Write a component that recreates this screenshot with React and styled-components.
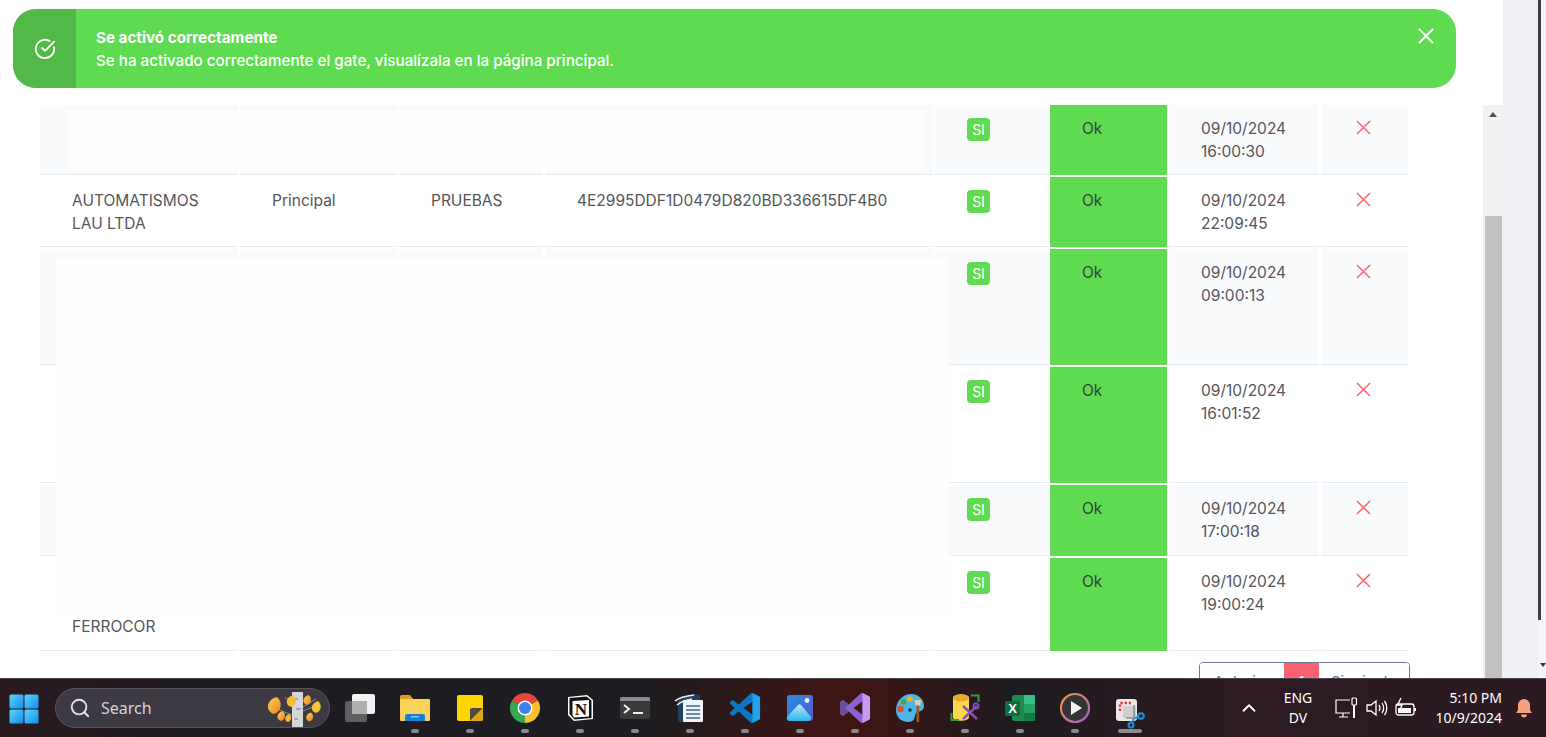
import React from 'react'
import styled, { createGlobalStyle } from 'styled-components'
import { CircleCheckBig, ChevronUp, Search } from 'lucide-react'

const GREEN = '#5fdb52'
const RED = '#fb6271'

const GlobalStyle = createGlobalStyle`
  * { box-sizing: border-box; }
  html, body { margin: 0; height: 100%; overflow: hidden; }
  body { font-family: 'Inter', 'Open Sans', sans-serif; background: #fff; color: #55555a; }
`

const Screen = styled.div`
  width: 1546px;
  height: 737px;
  display: flex;
  flex-direction: column;
  overflow: hidden;
`
const Desktop = styled.div`
  position: relative;
  height: 678px;
  display: flex;
  overflow: hidden;
`
const Content = styled.main`
  width: 1483px;
  padding: 103px 0 0 38px;
`
const Scrollbar = styled.div`
  width: 20px;
  margin-top: 105px;
  background: #f1f1f1;
  display: flex;
  flex-direction: column;
  align-items: center;
`
const ScrollArrow = styled.div`
  width: 0;
  height: 0;
  margin-top: 7px;
  border-left: 4px solid transparent;
  border-right: 4px solid transparent;
  border-bottom: 5px solid #505050;
`
const ScrollThumb = styled.div`
  width: 17px;
  flex: 1;
  margin-top: 99px;
  background: #c1c1c1;
`
const SideStrip = styled.aside`
  width: 43px;
  display: flex;
  background: #eff1f7;
`
const StripFill = styled.div`
  width: 35px;
`
const StripEdge = styled.div`
  flex: 1;
  position: relative;
  background: #f4f5f9;
  &::after {
    content: '';
    position: absolute;
    right: 0;
    top: 663px;
    border-left: 3px solid transparent;
    border-right: 3px solid transparent;
    border-top: 4px solid #333;
  }
`
const StripThumb = styled.div`
  width: 3px;
  height: 620px;
  background: #3f3f43;
`

const Toast = styled.div`
  position: absolute;
  left: 13px;
  top: 9px;
  width: 1443px;
  height: 79px;
  display: flex;
  border-radius: 23px;
  overflow: hidden;
  background: ${GREEN};
  color: #fff;
`
const ToastIcon = styled.div`
  width: 63px;
  display: flex;
  align-items: center;
  justify-content: center;
  background: #52b847;
`
const ToastBody = styled.div`
  flex: 1;
  padding: 17px 0 0 20px;
  font-size: 15.2px;
  line-height: 23px;
`
const ToastTitle = styled.div`
  font-weight: 700;
`
const ToastText = styled.div`
  font-weight: 500;
`
const ToastClose = styled.button`
  width: 16px;
  height: 16px;
  padding: 0;
  margin: 19px 22px 0 0;
  border: 0;
  background: none;
  display: flex;
`

const TableWrap = styled.div`
  position: relative;
  width: 1372px;
`
const Table = styled.table`
  width: 1372px;
  table-layout: fixed;
  border-collapse: separate;
  border-spacing: 2px;
  font-size: 15.5px;
  line-height: 23.5px;
`
const Row = styled.tr`
  td { height: ${(p) => p.$height}px; }
  &:nth-child(odd) td { background: #f9fafc; }
`
const Cell = styled.td`
  padding: 11.5px 0 ${(p) => (p.$bottom ? 12 : 0)}px 32px;
  vertical-align: ${(p) => (p.$bottom ? 'bottom' : 'top')};
  border-bottom: 1px solid #e3ecf5;
`
const StatusCell = styled(Cell)`
  &&&& { background: ${GREEN}; }
  border-bottom-color: ${GREEN};
  color: #33413a;
`
const ActionCell = styled(Cell)`
  padding: 15px 0 0 35px;
`
const Badge = styled.span`
  display: block;
  width: 23px;
  height: 23px;
  margin-top: 1.5px;
  border-radius: 4px;
  background: ${GREEN};
  color: #fff;
  font-size: 14px;
  line-height: 23px;
  text-align: center;
`
const Mask = styled.div`
  position: absolute;
  left: ${(p) => p.$left}px;
  top: ${(p) => p.$top}px;
  width: ${(p) => p.$width}px;
  height: ${(p) => p.$height}px;
  background: #fefefe;
`

const Pagination = styled.nav`
  width: 1372px;
  margin-top: 9px;
  display: flex;
  justify-content: flex-end;
`
const PageGroup = styled.div`
  display: flex;
  height: 46px;
  border: 1px solid #6c7a8e;
  border-radius: 4px;
  overflow: hidden;
`
const PageButton = styled.div`
  width: ${(p) => p.$width}px;
  text-align: center;
  font-size: 15px;
  line-height: 38px;
  color: ${(p) => (p.$active ? '#fff' : '#6c757d')};
  background: ${(p) => (p.$active ? RED : '#fff')};
`

const Taskbar = styled.footer`
  height: 59px;
  display: flex;
  align-items: stretch;
  padding-left: 9px;
  border-top: 1px solid #45454a;
  color: #fff;
  font-family: 'Noto Sans', 'Open Sans', sans-serif;
  background: linear-gradient(90deg, #2a1a20 0, #1f1c22 190px, #1d1c21 640px, #3f1513 830px, #3f1513 860px, #1e1b20 1010px, #2d1a22 1230px, #2c1a22 1546px);
`
const StartButton = styled.div`
  width: 30px;
  margin-top: 15px;
`
const SearchBox = styled.div`
  position: relative;
  width: 275px;
  height: 40px;
  margin: 9px 2px 0 16px;
  padding-left: 45px;
  border: 1px solid #57545c;
  border-radius: 20px;
  overflow: hidden;
  background: #3d3a44;
  color: #d5d1d6;
  font-size: 16px;
  line-height: 38px;
`
const SearchGlyph = styled(Search)`
  position: absolute;
  left: 13px;
  top: 8px;
`
const SearchArt = styled.svg`
  position: absolute;
  right: 6px;
  top: 0;
`
const TaskItem = styled.div`
  width: 55px;
  padding-top: 13px;
  display: flex;
  flex-direction: column;
  align-items: center;
`
const IconBox = styled.svg`
  display: block;
  overflow: visible;
`
const Pip = styled.div`
  width: ${(p) => (p.$wide ? 24 : 8)}px;
  height: 4px;
  margin-top: 5px;
  border-radius: 2px;
  background: ${(p) => (p.$wide ? '#8d8b90' : '#8a888c')};
`
const Tray = styled.div`
  margin-left: auto;
  display: flex;
  align-items: center;
`
const TrayChevron = styled(ChevronUp)`
  margin: 0 15px 0 0;
`
const Lang = styled.div`
  width: 44px;
  margin: 0 14px 0 1px;
  text-align: center;
  font-size: 14px;
  line-height: 20px;
`
const TrayIcons = styled.div`
  display: flex;
  align-items: center;
  gap: 6px;
  width: 88px;
`
const Clock = styled.div`
  width: 80px;
  text-align: right;
  font-size: 14px;
  line-height: 20px;
`
const Bell = styled.svg`
  margin: 0 13px 0 13px;
`

function Cross({ size = 15, color = RED, width = 1.6 }) {
  return (
    <svg width={size} height={size} viewBox="0 0 16 16" style={{ display: 'block' }}>
      <path d="M1 1L15 15M15 1L1 15" stroke={color} strokeWidth={width} fill="none" />
    </svg>
  )
}

function WindowsLogo() {
  return (
    <svg width="30" height="30" viewBox="0 0 30 30">
      <defs>
        <linearGradient id="win" x1="0" y1="0" x2="1" y2="1">
          <stop offset="0" stopColor="#5fd3fb" />
          <stop offset="1" stopColor="#0f8fef" />
        </linearGradient>
      </defs>
      <rect x="0.5" y="0.5" width="14" height="14" rx="1.5" fill="url(#win)" />
      <rect x="15.5" y="0.5" width="14" height="14" rx="1.5" fill="url(#win)" />
      <rect x="0.5" y="15.5" width="14" height="14" rx="1.5" fill="url(#win)" />
      <rect x="15.5" y="15.5" width="14" height="14" rx="1.5" fill="url(#win)" />
    </svg>
  )
}

const Leaf = ({ x, y, r = 5, fill = 'url(#leaf)' }) => (
  <path d={`M${x + r * 0.3} ${y - r}C${x + r} ${y - r * 0.6} ${x + r} ${y + r * 0.7} ${x} ${y + r}C${x - r} ${y + r * 0.7} ${x - r} ${y - r * 0.6} ${x + r * 0.3} ${y - r}Z`} fill={fill} />
)

function AutumnArt() {
  return (
    <SearchArt width="60" height="38" viewBox="0 0 60 38">
      <defs>
        <linearGradient id="leaf" x1="0" y1="0" x2="1" y2="1">
          <stop offset="0" stopColor="#fbd04a" />
          <stop offset="1" stopColor="#f0812c" />
        </linearGradient>
      </defs>
      <rect x="29" y="3" width="11" height="35" fill="#d5d6dc" />
      <path d="M31 10h4M33 20h5M31 30h4" stroke="#77757c" strokeWidth="1" />
      <path d="M14 20L29 26M29 14L22 8M40 18L53 10M40 22L52 17" stroke="#8d8790" strokeWidth="1" />
      <Leaf x={11} y={16.5} r={8.5} />
      <Leaf x={28} y={12} r={6} fill="#f8bd35" />
      <Leaf x={18} y={27} r={5} />
      <Leaf x={25} y={29} r={4} fill="#f8b636" />
      <Leaf x={44} y={11} r={5} />
      <Leaf x={53} y={18} r={6} fill="#f8c53a" />
      <Leaf x={46.5} y={28} r={4.5} />
    </SearchArt>
  )
}

const Icon32 = ({ children }) => (
  <IconBox width="32" height="32" viewBox="0 0 32 32">{children}</IconBox>
)

function TaskViewIcon() {
  return (
    <Icon32>
      <rect x="1" y="9" width="22" height="21" rx="2" fill="#5f5f5f" />
      <rect x="8" y="2" width="23" height="20" rx="2" fill="#f2f2f2" />
      <path d="M8 9h15v13H10a2 2 0 0 1-2-2z" fill="#b0b0b0" />
    </Icon32>
  )
}

function FolderIcon() {
  return (
    <Icon32>
      <path d="M1 5a2 2 0 0 1 2-2h8l3 4H1z" fill="#d9a21c" />
      <path d="M1 7h29a1 1 0 0 1 1 1v20a1 1 0 0 1-1 1H2a1 1 0 0 1-1-1z" fill="#fbd158" />
      <path d="M6 24a2 2 0 0 1 2-2h16a2 2 0 0 1 2 2v5H6z" fill="#1282d6" />
      <rect x="12" y="24" width="8" height="1.5" fill="#7cc8f5" />
    </Icon32>
  )
}

function StickyIcon() {
  return (
    <Icon32>
      <rect x="3" y="3" width="26" height="26" rx="2" fill="#ffd400" />
      <path d="M16 29V18a2 2 0 0 1 2-2h11L16 29z" fill="#4b4a47" />
      <path d="M29 16v11a2 2 0 0 1-2 2H16z" fill="#e0a70c" />
    </Icon32>
  )
}

function ChromeIcon() {
  return (
    <Icon32>
      <path d="M16 16L3 8.5A15 15 0 0 1 29 8.5z" fill="#e8453c" />
      <path d="M16 16L3 8.5A15 15 0 0 0 16 31z" fill="#34a853" />
      <path d="M16 16L29 8.5A15 15 0 0 1 16 31z" fill="#fbc02d" />
      <circle cx="16" cy="16" r="7.5" fill="#fff" />
      <circle cx="16" cy="16" r="6" fill="#3b82ec" />
    </Icon32>
  )
}

function NotionIcon() {
  return (
    <Icon32>
      <path d="M4 5L23 3L29 8V27L10 29L4 23z" fill="#fff" />
      <path d="M5.5 6L22.5 4.5L27.5 8.5V26L10.5 27.5L5.5 22z" fill="#111" />
      <path d="M8.5 9L25 8V24.5L10 25.5L8.5 23z" fill="#fff" />
      <text x="16.8" y="22.5" textAnchor="middle" fontFamily="Liberation Serif, serif" fontWeight="700" fontSize="17" fill="#111">N</text>
    </Icon32>
  )
}

function TerminalIcon() {
  return (
    <Icon32>
      <rect x="1" y="5" width="30" height="22" rx="2" fill="#3a3a3a" />
      <path d="M1 9V7a2 2 0 0 1 2-2h26a2 2 0 0 1 2 2v2z" fill="#8c8c8c" />
      <path d="M5 13l5 4-5 4" stroke="#eee" strokeWidth="2" fill="none" />
      <rect x="14" y="20" width="10" height="2" fill="#eee" />
    </Icon32>
  )
}

function DocIcon() {
  return (
    <Icon32>
      <path d="M4 8L20 2L26 3V30H8a3 3 0 0 1-4-2z" fill="#24405f" />
      <rect x="9" y="8" width="20" height="22" rx="1" fill="#f2f5f7" />
      <path d="M12 14h14M12 18h14M12 22h14M12 26h14" stroke="#6a8aa8" strokeWidth="2" />
      <path d="M1 9C6 5 11 4 20 3M3 13C8 9 12 8 18 7" stroke="#eceff2" strokeWidth="1.6" fill="none" />
    </Icon32>
  )
}

const VS_SHAPE = 'M23.15 2.587L18.21.21a1.494 1.494 0 0 0-1.705.29l-9.46 8.63-4.12-3.128a.999.999 0 0 0-1.276.057L.327 7.261A1 1 0 0 0 .326 8.74L3.899 12 .326 15.26a1 1 0 0 0 .001 1.479L1.65 17.94a.999.999 0 0 0 1.276.057l4.12-3.128 9.46 8.63a1.492 1.492 0 0 0 1.704.29l4.942-2.377A1.5 1.5 0 0 0 24 20.06V3.939a1.5 1.5 0 0 0-.85-1.352zm-5.146 14.861L10.826 12l7.178-5.448v10.896z'

function VsCodeIcon() {
  return (
    <svg width="32" height="32" viewBox="-0.75 -0.75 25.5 25.5">
      <path d={VS_SHAPE} fill="#0b78c6" />
      <path d="M18 6.55V0L23.15 2.587A1.5 1.5 0 0 1 24 3.94V20.06a1.5 1.5 0 0 1-.85 1.352L18 24z" fill="#22a2ea" />
    </svg>
  )
}

function VisualStudioIcon() {
  return (
    <svg width="32" height="32" viewBox="-0.75 -0.75 25.5 25.5">
      <path d={VS_SHAPE} fill="#8a63cf" />
      <path d="M0 7.5L3 6l4 3-3 3 3 3-4 3-3-1.5z" fill="#68509c" />
      <path d="M18 6.55V0L23.15 2.587A1.5 1.5 0 0 1 24 3.94V20.06a1.5 1.5 0 0 1-.85 1.352L18 24z" fill="#c79cf2" />
    </svg>
  )
}

function PhotosIcon() {
  return (
    <Icon32>
      <defs>
        <linearGradient id="photos" x1="0" y1="0" x2="1" y2="1">
          <stop offset="0" stopColor="#2690e0" />
          <stop offset="1" stopColor="#5a55c8" />
        </linearGradient>
        <linearGradient id="hill" x1="0" y1="0" x2="0" y2="1">
          <stop offset="0" stopColor="#b4ecfb" />
          <stop offset="1" stopColor="#2bb5f0" />
        </linearGradient>
      </defs>
      <rect x="3" y="3" width="26" height="26" rx="3" fill="url(#photos)" />
      <circle cx="23" cy="8.5" r="2.4" fill="#f2f4fb" />
      <path d="M3 25L14 13a2 2 0 0 1 3 0L27 25a3 3 0 0 1-3 4H6a3 3 0 0 1-3-4z" fill="url(#hill)" />
    </Icon32>
  )
}

function PaletteIcon() {
  return (
    <Icon32>
      <path d="M2 18C2 9 9 2 17 2C25 2 30 8 30 14C30 20 24 19 22 21C20 24 22 30 14 30C7 30 2 25 2 18Z" fill="#4ab6ea" />
      <circle cx="6.5" cy="17" r="3.2" fill="#e8492f" />
      <circle cx="9.5" cy="10" r="2.8" fill="#47a834" />
      <circle cx="16" cy="7" r="2.8" fill="#f3b41a" />
      <circle cx="16" cy="18" r="1.8" fill="#153a58" />
      <rect x="22.5" y="13" width="2.6" height="17" fill="#9b5a1e" />
      <path d="M20.5 8h6.6l-1 5.5h-4.6z" fill="#e7cfa0" />
    </Icon32>
  )
}

function DbToolIcon() {
  return (
    <Icon32>
      <path d="M4 6c0-5 16-5 16 0v19c0 5-16 5-16 0z" fill="#fbd94d" />
      <ellipse cx="12" cy="6" rx="8" ry="3.4" fill="#e9a92c" />
      <path d="M22 3.5h7.5V10M2.5 21v7H10" stroke="#3f9a3f" strokeWidth="2" fill="none" />
      <path d="M14 14l14 13M28 14L14 27" stroke="#8a4ebc" strokeWidth="2.4" />
      <circle cx="27" cy="14" r="2.6" fill="none" stroke="#8a4ebc" strokeWidth="1.8" />
    </Icon32>
  )
}

function ExcelIcon() {
  return (
    <Icon32>
      <rect x="8" y="3" width="23" height="26" rx="2" fill="#1e8a52" />
      <rect x="20" y="3" width="11" height="9" fill="#34c084" />
      <rect x="20" y="12" width="11" height="9" fill="#21a366" />
      <rect x="20" y="21" width="11" height="8" fill="#107c41" />
      <rect x="1" y="9" width="15" height="15" rx="1.5" fill="#0e6f3c" />
      <text x="8.5" y="21" textAnchor="middle" fontFamily="Liberation Sans, sans-serif" fontWeight="700" fontSize="13" fill="#fff">X</text>
    </Icon32>
  )
}

function PlayerIcon() {
  return (
    <Icon32>
      <defs>
        <linearGradient id="ring" x1="0" y1="0" x2="1" y2="1">
          <stop offset="0" stopColor="#f59a3c" />
          <stop offset="1" stopColor="#9d62c8" />
        </linearGradient>
      </defs>
      <circle cx="16" cy="16" r="14" fill="#343438" stroke="url(#ring)" strokeWidth="2.2" />
      <path d="M12 9l11 7-11 7z" fill="#f2f2f2" />
    </Icon32>
  )
}

function SnipIcon() {
  return (
    <Icon32>
      <rect x="2" y="7" width="21" height="22" rx="3" fill="#e8e8ea" />
      <path d="M6 19V11h11" stroke="#d8402f" strokeWidth="2.4" strokeDasharray="2.4 1.8" fill="none" />
      <path d="M9 14h13v12H9z" fill="#cfcfd2" />
      <path d="M20 13v12M12 26h10" stroke="#8e8e92" strokeWidth="1.6" fill="none" />
      <circle cx="27" cy="24" r="2.8" fill="none" stroke="#1d8fdc" strokeWidth="2" />
      <circle cx="17" cy="33" r="2.5" fill="none" stroke="#1d8fdc" strokeWidth="2" />
      <path d="M21 26l4-1.5M20 26l-2 5" stroke="#1d8fdc" strokeWidth="2" />
    </Icon32>
  )
}

function NetworkIcon() {
  return (
    <svg width="24" height="24" viewBox="0 0 24 24" fill="none" stroke="#fff" strokeWidth="1.2">
      <path d="M16 4H2v13h14M5 21h9M9 17v4" />
      <rect x="18" y="2" width="4.5" height="7" rx="1" />
      <path d="M20 9v13" strokeWidth="2" />
    </svg>
  )
}

function VolumeIcon() {
  return (
    <svg width="24" height="24" viewBox="0 0 24 24" fill="none" stroke="#fff" strokeWidth="1.3">
      <path d="M3 9v6h4l5 4V5L7 9z" />
      <path d="M15 9c1.2 1.8 1.2 4.2 0 6M18 7c2 3 2 7 0 10M20.5 5c3 4 3 10 0 14" />
    </svg>
  )
}

function BatteryIcon() {
  return (
    <svg width="24" height="24" viewBox="0 0 24 24" fill="none" stroke="#fff" strokeWidth="1.3">
      <rect x="2" y="8" width="18" height="11" rx="2.5" />
      <rect x="4" y="12" width="13" height="5" fill="#fff" stroke="none" />
      <path d="M21 12v3" strokeWidth="2" />
      <path d="M7 2L3.5 9H8l-2 5" strokeWidth="1.4" />
    </svg>
  )
}

const taskIcons = [
  { id: 'task', Icon: TaskViewIcon, hidden: true },
  { id: 'folder', Icon: FolderIcon },
  { id: 'sticky', Icon: StickyIcon },
  { id: 'chrome', Icon: ChromeIcon },
  { id: 'notion', Icon: NotionIcon },
  { id: 'terminal', Icon: TerminalIcon },
  { id: 'doc', Icon: DocIcon },
  { id: 'vscode', Icon: VsCodeIcon },
  { id: 'photos', Icon: PhotosIcon },
  { id: 'vs', Icon: VisualStudioIcon },
  { id: 'palette', Icon: PaletteIcon },
  { id: 'db', Icon: DbToolIcon },
  { id: 'excel', Icon: ExcelIcon },
  { id: 'player', Icon: PlayerIcon },
  { id: 'snip', Icon: SnipIcon, wide: true },
]

const rows = [
  { height: 70, date: '09/10/2024', time: '16:00:30' },
  { height: 70, company: ['AUTOMATISMOS', 'LAU LTDA'], type: 'Principal', name: 'PRUEBAS', code: '4E2995DDF1D0479D820BD336615DF4B0', date: '09/10/2024', time: '22:09:45' },
  { height: 116, date: '09/10/2024', time: '09:00:13' },
  { height: 116, date: '09/10/2024', time: '16:01:52' },
  { height: 71, date: '09/10/2024', time: '17:00:18' },
  { height: 93, company: ['FERROCOR'], date: '09/10/2024', time: '19:00:24' },
]

const columns = [198, 157, 144, 388, 113, 117, 150, 87]

export default function App() {
  return (
    <Screen>
      <GlobalStyle />
      <Desktop>
        <Toast>
          <ToastIcon>
            <CircleCheckBig size={22} strokeWidth={2} />
          </ToastIcon>
          <ToastBody>
            <ToastTitle>Se activó correctamente</ToastTitle>
            <ToastText>Se ha activado correctamente el gate, visualízala en la página principal.</ToastText>
          </ToastBody>
          <ToastClose aria-label="Cerrar">
            <Cross size={16} color="#fff" width={1.8} />
          </ToastClose>
        </Toast>

        <Content>
          <TableWrap>
            <Table>
              <colgroup>
                {columns.map((width, i) => <col key={i} width={width} />)}
              </colgroup>
              <tbody>
                {rows.map((row) => (
                  <Row key={row.time} $height={row.height}>
                    <Cell $bottom={row.company?.length === 1}>
                      {row.company?.map((line) => <div key={line}>{line}</div>)}
                    </Cell>
                    <Cell>{row.type}</Cell>
                    <Cell>{row.name}</Cell>
                    <Cell>{row.code}</Cell>
                    <Cell><Badge>SI</Badge></Cell>
                    <StatusCell>Ok</StatusCell>
                    <Cell>{row.date}<br />{row.time}</Cell>
                    <ActionCell><Cross /></ActionCell>
                  </Row>
                ))}
              </tbody>
            </Table>
            <Mask $left={31} $top={8} $width={855} $height={60} />
            <Mask $left={18} $top={155} $width={893} $height={357} />
          </TableWrap>
          <Pagination>
            <PageGroup>
              <PageButton $width={84}>Anterior</PageButton>
              <PageButton $width={35} $active>1</PageButton>
              <PageButton $width={90}>Siguiente</PageButton>
            </PageGroup>
          </Pagination>
        </Content>
        <Scrollbar>
          <ScrollArrow />
          <ScrollThumb />
        </Scrollbar>
        <SideStrip>
          <StripFill />
          <StripEdge>
            <StripThumb />
          </StripEdge>
        </SideStrip>
      </Desktop>

      <Taskbar>
        <StartButton><WindowsLogo /></StartButton>
        <SearchBox>
          <SearchGlyph size={22} color="#e6e3e8" strokeWidth={2} />
          Search
          <AutumnArt />
        </SearchBox>
        {taskIcons.map(({ id, Icon, hidden, wide }) => (
          <TaskItem key={id}>
            <Icon />
            {!hidden && <Pip $wide={wide} />}
          </TaskItem>
        ))}
        <Tray>
          <TrayChevron size={22} color="#fff" strokeWidth={2} />
          <Lang>ENG<br />DV</Lang>
          <TrayIcons>
            <NetworkIcon />
            <VolumeIcon />
            <BatteryIcon />
          </TrayIcons>
          <Clock>5:10 PM<br />10/9/2024</Clock>
          <Bell width="18" height="20" viewBox="0 0 18 20">
            <path d="M9 1a6 6 0 0 0-6 6v5l-2 3h16l-2-3V7a6 6 0 0 0-6-6z" fill="#f4a27f" />
            <path d="M6 16.5h6a3 3 0 0 1-6 0z" fill="#f4a27f" />
          </Bell>
        </Tray>
      </Taskbar>
    </Screen>
  )
}
